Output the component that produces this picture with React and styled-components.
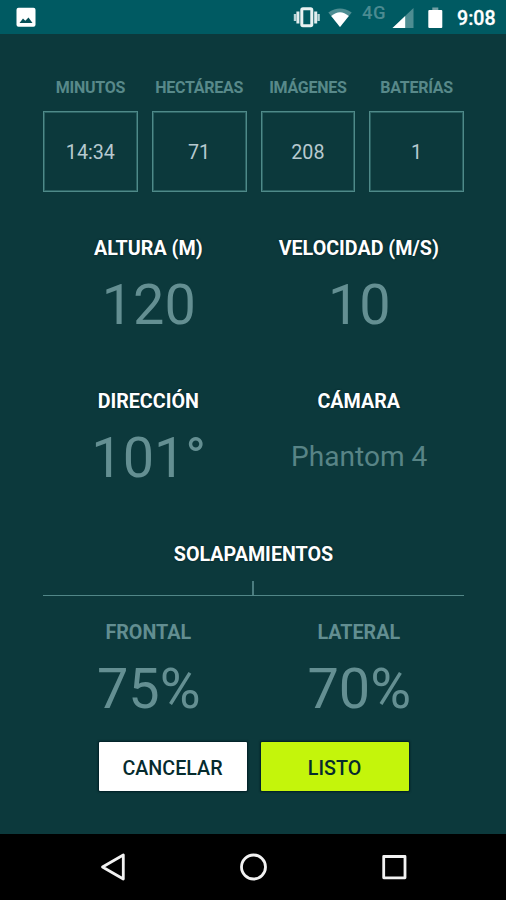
import React from 'react';
import styled, { createGlobalStyle } from 'styled-components';

const GlobalStyle = createGlobalStyle`
  * { box-sizing: border-box; }
  body { margin: 0; background: #0c393c; }
`;

const Screen = styled.div`
  display: flex;
  flex-direction: column;
  width: 506px;
  height: 900px;
  overflow: hidden;
  background: #0c393c;
  font-family: Roboto, 'Noto Sans', sans-serif;
`;

const StatusBar = styled.header`
  display: flex;
  justify-content: space-between;
  height: 34px;
  background: #005a62;
`;

const StatusIcons = styled.svg`
  display: block;
  width: ${({ $width }) => $width}px;
  height: 34px;
`;

const StatusGroup = styled.div`
  display: flex;
`;

const Network = styled.span`
  width: 30px;
  padding-left: 6px;
  font-size: 18.5px;
  font-weight: 500;
  line-height: 27px;
  letter-spacing: 0.6px;
  color: #4b8b91;
`;

const Clock = styled.time`
  width: 57px;
  padding-left: 8px;
  font-size: 19.6px;
  font-weight: 500;
  line-height: 37px;
  color: #fff;
  -webkit-text-stroke: 0.3px #fff;
`;

const Content = styled.main`
  display: flex;
  flex-direction: column;
  height: 800px;
  padding: 44px 42px 0 43px;
`;

const Stats = styled.section`
  display: grid;
  grid-template-columns: repeat(4, 1fr);
  column-gap: 14px;
`;

const Stat = styled.div`
  display: flex;
  flex-direction: column;
  align-items: center;
  gap: 13px;
`;

const StatLabel = styled.span`
  font-size: 16px;
  font-weight: 700;
  line-height: 20px;
  letter-spacing: -0.25px;
  white-space: nowrap;
  color: #58898a;
`;

const StatBox = styled.div`
  display: flex;
  align-items: center;
  justify-content: center;
  width: 100%;
  height: 81px;
  padding-top: 1px;
  border: 1px solid #4f8a89;
  box-shadow: inset 0 0 0 1px #2a6061;
  font-size: 19.7px;
  color: #b7c9cf;
`;

const Fields = styled.section`
  display: grid;
  grid-template-columns: 1fr 1fr;
  row-gap: 52px;
  margin-top: ${({ $top }) => $top}px;
`;

const Field = styled.div`
  display: flex;
  flex-direction: column;
  align-items: center;
  gap: 13px;
`;

const FieldLabel = styled.span`
  font-size: 19.7px;
  font-weight: 700;
  line-height: 24px;
  white-space: nowrap;
  color: ${({ $muted }) => ($muted ? '#628e91' : '#fff')};
  text-shadow: ${({ $muted }) => ($muted ? 'none' : '0 0 2px #031c20')};
`;

const FieldValue = styled.span`
  height: 64px;
  padding-left: 1px;
  font-size: ${({ $small }) => ($small ? 28.1 : 55.8)}px;
  line-height: ${({ $small }) => ($small ? 60 : 62)}px;
  white-space: nowrap;
  color: ${({ $small }) => ($small ? '#588486' : '#648f92')};
`;

const OverlapHeading = styled.div`
  display: flex;
  flex-direction: column;
  align-items: center;
  margin-top: 52px;
  border-bottom: 1px solid #528788;
`;

const Tick = styled.span`
  width: 2px;
  height: 14px;
  margin: 14px 1px 0 0;
  background: #4b7c7f;
`;

const Actions = styled.div`
  display: flex;
  justify-content: center;
  gap: 14px;
  margin-top: 20px;
`;

const Button = styled.button`
  width: 148px;
  height: 49px;
  padding: 4px 0 0;
  border: 0;
  border-radius: 1px;
  background: ${({ $primary }) => ($primary ? '#c4f50b' : '#fff')};
  box-shadow: 0 0 2px 1px #001d25;
  font-family: inherit;
  font-size: 19.7px;
  font-weight: 500;
  color: #062b2e;
`;

const NavBar = styled.nav`
  display: flex;
  height: 66px;
  background: #000;
`;

const NavIcon = styled.svg`
  display: block;
  width: 506px;
  height: 66px;
  fill: none;
  stroke: #f2f2f2;
  stroke-width: 2.8;
  stroke-linejoin: round;
`;

const stats = [
  ['MINUTOS', '14:34'],
  ['HECTÁREAS', '71'],
  ['IMÁGENES', '208'],
  ['BATERÍAS', '1'],
];

const settings = [
  { label: 'ALTURA (M)', value: '120' },
  { label: 'VELOCIDAD (M/S)', value: '10' },
  { label: 'DIRECCIÓN', value: '101°' },
  { label: 'CÁMARA', value: 'Phantom 4', small: true },
];

const overlaps = [
  { label: 'FRONTAL', value: '75%' },
  { label: 'LATERAL', value: '70%' },
];

function FieldGrid({ items, top, muted }) {
  return (
    <Fields $top={top}>
      {items.map(({ label, value, small }) => (
        <Field key={label}>
          <FieldLabel $muted={muted}>{label}</FieldLabel>
          <FieldValue $small={small}>{value}</FieldValue>
        </Field>
      ))}
    </Fields>
  );
}

export default function App() {
  return (
    <>
      <GlobalStyle />
      <Screen>
        <StatusBar>
          <StatusIcons $width={50} viewBox="0 0 50 34">
            <rect x="16.5" y="7.7" width="19" height="19" rx="2" fill="#fff" />
            <path d="M19.5 23 L23 18.5 L25.3 20.8 L28.5 17.5 L32.5 23 Z" fill="#075158" />
          </StatusIcons>
          <StatusGroup>
            <StatusIcons $width={63} viewBox="293 0 63 34">
              <path d="M295 14v7M318.6 14v7" stroke="#b8d4d6" strokeWidth="2.4" />
              <path d="M297.9 11.5v12M315.7 11.5v12" stroke="#e1edee" strokeWidth="3" />
              <rect x="301.8" y="8.7" width="10" height="17" rx="1.2" fill="none" stroke="#e9f2f2" strokeWidth="3" />
              <path d="M328.3 12.5 Q340 4.5 351.7 12.5 L340 27 Z" fill="#4e8d92" />
              <path d="M331.2 16 Q340 8.3 348.8 16 L340 27 Z" fill="#fff" />
            </StatusIcons>
            <Network>4G</Network>
            <StatusIcons $width={63} viewBox="386 0 63 34">
              <path d="M392.5 28 L413.5 8 V28 Z" fill="#4e8d92" />
              <path d="M392.5 28 L405.2 16 V28 Z" fill="#fff" />
              <rect x="432.3" y="7.5" width="6" height="3" fill="#729fa4" />
              <rect x="428.3" y="10" width="14" height="18" rx="1" fill="#fff" />
            </StatusIcons>
            <Clock>9:08</Clock>
          </StatusGroup>
        </StatusBar>
        <Content>
          <Stats>
            {stats.map(([label, value]) => (
              <Stat key={label}>
                <StatLabel>{label}</StatLabel>
                <StatBox>{value}</StatBox>
              </Stat>
            ))}
          </Stats>
          <FieldGrid items={settings} top={45} />
          <OverlapHeading>
            <FieldLabel>SOLAPAMIENTOS</FieldLabel>
            <Tick />
          </OverlapHeading>
          <FieldGrid items={overlaps} top={25} muted />
          <Actions>
            <Button>CANCELAR</Button>
            <Button $primary>LISTO</Button>
          </Actions>
        </Content>
        <NavBar>
          <NavIcon viewBox="0 0 506 66">
            <path d="M123.3 21 V45 L102.5 33 Z" />
            <circle cx="253.5" cy="33" r="12" />
            <rect x="383.7" y="22.5" width="21.3" height="21.3" />
          </NavIcon>
        </NavBar>
      </Screen>
    </>
  );
}
